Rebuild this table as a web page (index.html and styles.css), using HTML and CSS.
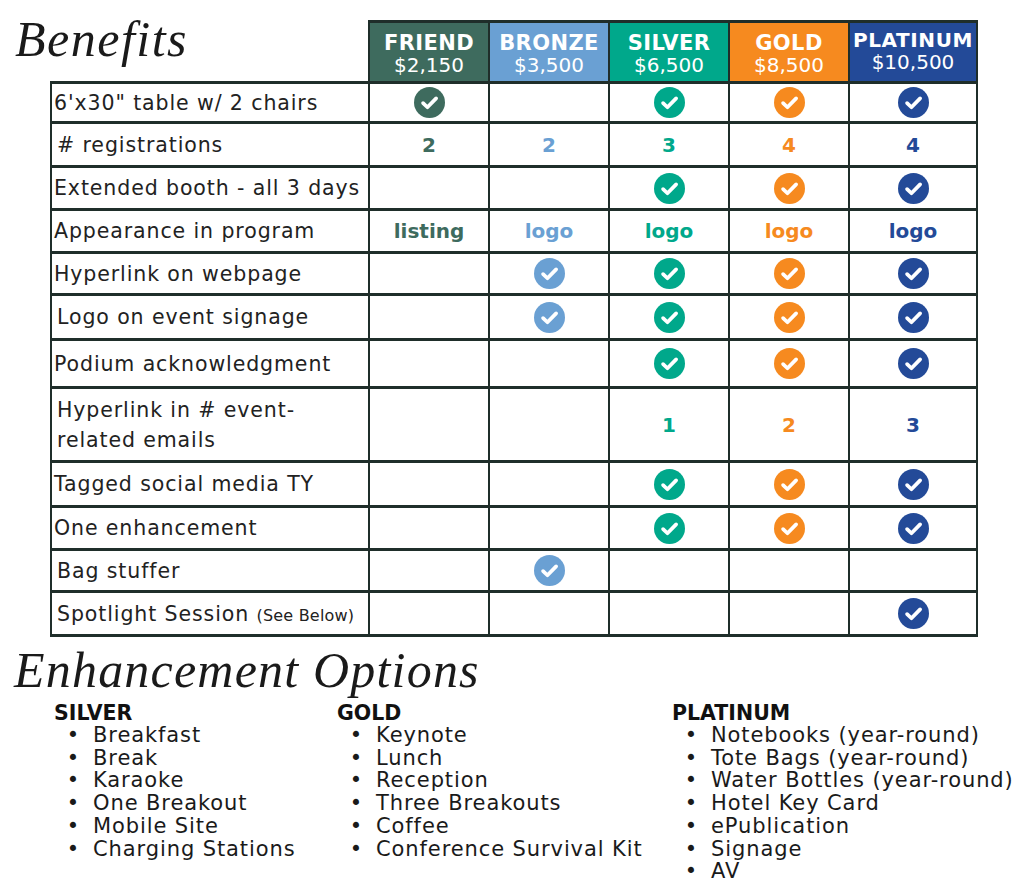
FILE: index.html
```html
<!DOCTYPE html>
<html>
<head>
<meta charset="utf-8">
<link rel="stylesheet" href="styles.css">
</head>
<body>
<svg width="0" height="0" class="defs">
  <defs>
    <symbol id="chk" viewBox="0 0 30 30">
      <circle cx="15" cy="15" r="15" fill="currentColor"/>
      <path d="M8.8 15.6 L13 19.6 L21.4 11" fill="none" stroke="#fff" stroke-width="3.6" stroke-linecap="round" stroke-linejoin="round"/>
    </symbol>
  </defs>
</svg>
<div class="page">
  <table class="grid">
    <colgroup>
      <col class="c-label"><col class="c-tier"><col class="c-tier"><col class="c-tier"><col class="c-tier"><col class="c-last">
    </colgroup>
    <thead>
      <tr class="r-head">
        <th class="corner"><div class="script title">Benefits</div></th>
        <th class="tier friend"><div class="tname">FRIEND</div><div class="tprice">$2,150</div></th>
        <th class="tier bronze"><div class="tname">BRONZE</div><div class="tprice">$3,500</div></th>
        <th class="tier silver"><div class="tname">SILVER</div><div class="tprice">$6,500</div></th>
        <th class="tier gold"><div class="tname">GOLD</div><div class="tprice">$8,500</div></th>
        <th class="tier platinum"><div class="tname small">PLATINUM</div><div class="tprice small">$10,500</div></th>
      </tr>
    </thead>
    <tbody>
      <tr class="h40">
        <td class="lbl">6'x30" table w/ 2 chairs</td>
        <td class="v t-friend"><svg class="ck"><use href="#chk"/></svg></td>
        <td class="v"></td>
        <td class="v t-silver"><svg class="ck"><use href="#chk"/></svg></td>
        <td class="v t-gold"><svg class="ck"><use href="#chk"/></svg></td>
        <td class="v t-platinum"><svg class="ck"><use href="#chk"/></svg></td>
      </tr>
      <tr class="h44">
        <td class="lbl in">#&nbsp;registrations</td>
        <td class="v num t-friend">2</td>
        <td class="v num t-bronze">2</td>
        <td class="v num t-silver">3</td>
        <td class="v num t-gold">4</td>
        <td class="v num t-platinum">4</td>
      </tr>
      <tr class="h43">
        <td class="lbl">Extended booth - all 3 days</td>
        <td class="v"></td>
        <td class="v"></td>
        <td class="v t-silver"><svg class="ck"><use href="#chk"/></svg></td>
        <td class="v t-gold"><svg class="ck"><use href="#chk"/></svg></td>
        <td class="v t-platinum"><svg class="ck"><use href="#chk"/></svg></td>
      </tr>
      <tr class="h43">
        <td class="lbl">Appearance in program</td>
        <td class="v word t-friend">listing</td>
        <td class="v word t-bronze">logo</td>
        <td class="v word t-silver">logo</td>
        <td class="v word t-gold">logo</td>
        <td class="v word t-platinum">logo</td>
      </tr>
      <tr class="h42">
        <td class="lbl">Hyperlink on webpage</td>
        <td class="v"></td>
        <td class="v t-bronze"><svg class="ck"><use href="#chk"/></svg></td>
        <td class="v t-silver"><svg class="ck"><use href="#chk"/></svg></td>
        <td class="v t-gold"><svg class="ck"><use href="#chk"/></svg></td>
        <td class="v t-platinum"><svg class="ck"><use href="#chk"/></svg></td>
      </tr>
      <tr class="h45">
        <td class="lbl in">Logo on event signage</td>
        <td class="v"></td>
        <td class="v t-bronze"><svg class="ck"><use href="#chk"/></svg></td>
        <td class="v t-silver"><svg class="ck"><use href="#chk"/></svg></td>
        <td class="v t-gold"><svg class="ck"><use href="#chk"/></svg></td>
        <td class="v t-platinum"><svg class="ck"><use href="#chk"/></svg></td>
      </tr>
      <tr class="h48">
        <td class="lbl">Podium acknowledgment</td>
        <td class="v"></td>
        <td class="v"></td>
        <td class="v t-silver"><svg class="ck"><use href="#chk"/></svg></td>
        <td class="v t-gold"><svg class="ck"><use href="#chk"/></svg></td>
        <td class="v t-platinum"><svg class="ck"><use href="#chk"/></svg></td>
      </tr>
      <tr class="h74">
        <td class="lbl in two">Hyperlink in # event-<br>related emails</td>
        <td class="v"></td>
        <td class="v"></td>
        <td class="v num t-silver">1</td>
        <td class="v num t-gold">2</td>
        <td class="v num t-platinum">3</td>
      </tr>
      <tr class="h45">
        <td class="lbl">Tagged social media TY</td>
        <td class="v"></td>
        <td class="v"></td>
        <td class="v t-silver"><svg class="ck"><use href="#chk"/></svg></td>
        <td class="v t-gold"><svg class="ck"><use href="#chk"/></svg></td>
        <td class="v t-platinum"><svg class="ck"><use href="#chk"/></svg></td>
      </tr>
      <tr class="h43">
        <td class="lbl">One enhancement</td>
        <td class="v"></td>
        <td class="v"></td>
        <td class="v t-silver"><svg class="ck"><use href="#chk"/></svg></td>
        <td class="v t-gold"><svg class="ck"><use href="#chk"/></svg></td>
        <td class="v t-platinum"><svg class="ck"><use href="#chk"/></svg></td>
      </tr>
      <tr class="h42">
        <td class="lbl in">Bag stuffer</td>
        <td class="v"></td>
        <td class="v t-bronze"><svg class="ck"><use href="#chk"/></svg></td>
        <td class="v"></td>
        <td class="v"></td>
        <td class="v"></td>
      </tr>
      <tr class="h44">
        <td class="lbl in">Spotlight Session <span class="note">(See Below)</span></td>
        <td class="v"></td>
        <td class="v"></td>
        <td class="v"></td>
        <td class="v"></td>
        <td class="v t-platinum"><svg class="ck"><use href="#chk"/></svg></td>
      </tr>
    </tbody>
  </table>

  <div class="script subtitle">Enhancement Options</div>

  <div class="options">
    <div class="opt">
      <div class="opt-h">SILVER</div>
      <ul>
        <li>Breakfast</li>
        <li>Break</li>
        <li>Karaoke</li>
        <li>One Breakout</li>
        <li>Mobile Site</li>
        <li>Charging Stations</li>
      </ul>
    </div>
    <div class="opt">
      <div class="opt-h">GOLD</div>
      <ul>
        <li>Keynote</li>
        <li>Lunch</li>
        <li>Reception</li>
        <li>Three Breakouts</li>
        <li>Coffee</li>
        <li>Conference Survival Kit</li>
      </ul>
    </div>
    <div class="opt">
      <div class="opt-h">PLATINUM</div>
      <ul>
        <li>Notebooks (year-round)</li>
        <li>Tote Bags (year-round)</li>
        <li>Water Bottles (year-round)</li>
        <li>Hotel Key Card</li>
        <li>ePublication</li>
        <li>Signage</li>
        <li>AV</li>
      </ul>
    </div>
  </div>
</div>
</body>
</html>
```

FILE: styles.css
```css
* { box-sizing: border-box; }
html, body { margin: 0; padding: 0; background: #fff; }
body {
  font-family: "DejaVu Sans", "Liberation Sans", sans-serif;
  color: #222;
  width: 1024px;
  height: 889px;
  overflow: hidden;
}
.defs { position: absolute; width: 0; height: 0; }

.page {
  padding: 20px 0 0 50px;
}

.grid {
  border-collapse: collapse;
  table-layout: fixed;
  width: 926px;
}
.c-label { width: 318px; }
.c-tier { width: 120px; }
.c-last { width: 128px; }

.grid td, .grid th {
  border-top: 3px solid #1f2e2a;
  border-bottom: 3px solid #1f2e2a;
  border-left: 2px solid #1f2e2a;
  border-right: 2px solid #1f2e2a;
  padding: 0;
}
.grid th.corner {
  border: none;
  text-align: left;
  vertical-align: top;
  padding: 0;
}
.script {
  font-family: "Liberation Serif", "DejaVu Serif", serif;
  font-style: italic;
  font-weight: 400;
  color: #1a1a1a;
  line-height: 1;
}
.title {
  margin: -8px 0 0 -36px;
  font-size: 50px;
  letter-spacing: 1.5px;
}

.r-head { height: 61px; }
.tier {
  color: #fff;
  text-align: center;
  vertical-align: middle;
  line-height: 22px;
  padding-top: 4px !important;
}
.tname { font-weight: 700; font-size: 21px; letter-spacing: 0.4px; }
.tprice { font-weight: 400; font-size: 20px; }
.tname.small { font-size: 20px; letter-spacing: 0.6px; margin-top: -6px; }
.tprice.small { font-size: 20px; }
.friend { background: #3e6b5e; }
.bronze { background: #6aa0d3; }
.silver { background: #00a88b; }
.gold { background: #f68a1f; }
.platinum { background: #234a98; }

.h40 { height: 40px; }
.h42 { height: 42px; }
.h43 { height: 43px; }
.h44 { height: 44px; }
.h45 { height: 45px; }
.h48 { height: 48px; }
.h74 { height: 74px; }

.lbl {
  font-size: 20.5px;
  letter-spacing: 0.9px;
  padding: 0 0 0 2px !important;
  vertical-align: middle;
  white-space: nowrap;
  color: #222;
}
.lbl.in { padding-left: 5px !important; }
.lbl.two { line-height: 30px; }
.note { font-size: 16px; letter-spacing: 0.2px; }

.v {
  text-align: center;
  vertical-align: middle;
}
.num { font-weight: 700; font-size: 20px; }
.word { font-weight: 700; font-size: 20px; }
.ck { width: 31px; height: 31px; display: block; margin: 0 auto; }

.t-friend { color: #3e6b5e; }
.t-bronze { color: #6aa0d3; }
.t-silver { color: #00a88b; }
.t-gold { color: #f68a1f; }
.t-platinum { color: #234a98; }

.subtitle {
  font-size: 50px;
  letter-spacing: 1.2px;
  margin: 8px 0 0 -36px;
}

.options {
  display: grid;
  grid-template-columns: 283px 335px 1fr;
  margin: 7px 0 0 4px;
  color: #1a1a1a;
}
.opt-h {
  font-weight: 700;
  font-size: 20.5px;
  line-height: 22px;
  color: #111;
}
.opt ul {
  list-style: none;
  margin: 0;
  padding: 0 0 0 9px;
}
.opt li {
  display: flex;
  font-size: 21px;
  line-height: 22.7px;
  white-space: nowrap;
  letter-spacing: 0.9px;
}
.opt li::before {
  content: "\2022";
  width: 20px;
  margin-right: 10px;
  text-align: center;
  flex: none;
  letter-spacing: 0;
}
```
